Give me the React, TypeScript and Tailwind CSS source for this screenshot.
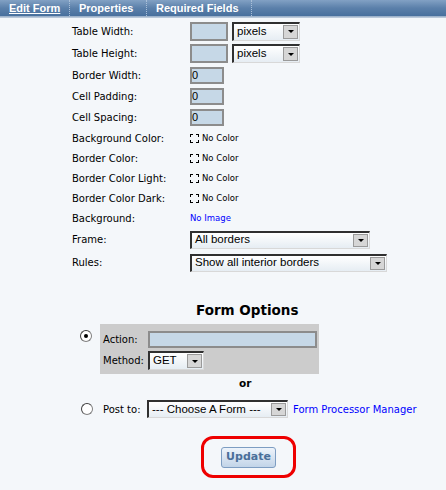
import React from "react";

const lbl = "font-['DejaVu_Sans',Verdana,sans-serif] text-[10px] text-black";

function Select({ w, h = 18, text }: { w: number; h?: number; text: string }) {
  return (
    <div
      className="flex items-stretch border-t-2 border-l-2 border-t-[#303030] border-l-[#303030] border-r border-b border-r-[#d8d8d8] border-b-[#d8d8d8] bg-gradient-to-b from-[#ffffff] to-[#e6edf3]"
      style={{ width: w, height: h }}
    >
      <div className="flex-1 flex items-center pl-[3px] font-['Liberation_Sans',Arial,sans-serif] text-[11.5px] text-black leading-none whitespace-nowrap overflow-hidden">
        {text}
      </div>
      <div className="w-[15px] my-[1px] mr-[1px] border border-[#9a9a9a] bg-[#d6d6d6] flex items-center justify-center">
        <div className="w-0 h-0 border-l-[3px] border-r-[3px] border-t-[3px] border-l-transparent border-r-transparent border-t-black" />
      </div>
    </div>
  );
}

function Input({ w, h, value }: { w: number; h: number; value?: string }) {
  return (
    <div
      className="border-2 border-[#8c8c8c] bg-[#c6d8e7] flex items-center font-['Liberation_Sans',Arial,sans-serif] text-[11px] text-black leading-none"
      style={{ width: w, height: h }}
    >
      {value}
    </div>
  );
}

function Row({ h, label, children }: { h: number; label: string; children?: React.ReactNode }) {
  return (
    <div className="flex items-center" style={{ height: h }}>
      <div className={`${lbl} w-[118px]`}>{label}</div>
      <div className="flex items-center gap-[4px]">{children}</div>
    </div>
  );
}

function NoColor() {
  return (
    <div className="flex items-center gap-[3px]">
      <div className="w-[9px] h-[9px] border border-dashed border-black" />
      <span className="font-['DejaVu_Sans',Verdana,sans-serif] text-[8.5px] text-black">No Color</span>
    </div>
  );
}

function Radio({ checked }: { checked?: boolean }) {
  return (
    <div className="w-[12px] h-[12px] rounded-full border border-[#808080] border-t-[#404040] border-l-[#404040] bg-white flex items-center justify-center">
      {checked && <div className="w-[4px] h-[4px] rounded-full bg-black" />}
    </div>
  );
}

export default function App() {
  return (
    <div className="w-[446px] h-[490px] bg-[#f4f7fa] overflow-hidden">
      <div className="h-[16px] bg-gradient-to-b from-[#82a1c4] via-[#5b80aa] to-[#48709d] flex items-center font-['Liberation_Sans',Arial,sans-serif] text-[11px] font-bold text-white">
        <div className="pl-[9px] w-[69px] underline leading-none">Edit Form</div>
        <div className="h-full border-l border-dotted border-[#a9bfd8]" />
        <div className="pl-[9px] w-[76px] leading-none">Properties</div>
        <div className="h-full border-l border-dotted border-[#a9bfd8]" />
        <div className="pl-[9px] w-[104px] leading-none whitespace-nowrap">Required Fields</div>
        <div className="h-full border-l border-dotted border-[#a9bfd8]" />
      </div>
      <div className="h-[2px] bg-gradient-to-b from-[#8fa7c3] to-[#c9d5e2]" />

      <div className="pl-[72px] pt-[2px]">
        <Row h={22} label="Table Width:">
          <Input w={38} h={19} />
          <Select w={68} h={19} text="pixels" />
        </Row>
        <Row h={23} label="Table Height:">
          <Input w={38} h={19} />
          <Select w={68} h={19} text="pixels" />
        </Row>
        <Row h={21} label="Border Width:">
          <Input w={34} h={17} value="0" />
        </Row>
        <Row h={21} label="Cell Padding:">
          <Input w={34} h={17} value="0" />
        </Row>
        <Row h={21} label="Cell Spacing:">
          <Input w={34} h={17} value="0" />
        </Row>
        <Row h={20} label="Background Color:">
          <NoColor />
        </Row>
        <Row h={20} label="Border Color:">
          <NoColor />
        </Row>
        <Row h={20} label="Border Color Light:">
          <NoColor />
        </Row>
        <Row h={20} label="Border Color Dark:">
          <NoColor />
        </Row>
        <Row h={20} label="Background:">
          <span className="font-['DejaVu_Sans',Verdana,sans-serif] text-[8.5px] text-[#0000ff]">No Image</span>
        </Row>
        <Row h={23} label="Frame:">
          <Select w={180} h={18} text="All borders" />
        </Row>
        <Row h={23} label="Rules:">
          <Select w={197} h={18} text="Show all interior borders" />
        </Row>
      </div>

      <div className="mt-[27px] pl-[196px] h-[18px] flex items-center font-['DejaVu_Sans',Verdana,sans-serif] text-[13.5px] font-bold text-black">
        Form Options
      </div>

      <div className="mt-[5px] flex items-start pl-[80px]">
        <div className="pt-[6px] w-[20px]">
          <Radio checked />
        </div>
        <div className="w-[219px] h-[50px] bg-[#cccccc] pl-[3px] pt-[6px] flex flex-col gap-[3px]">
          <div className="flex items-center h-[18px]">
            <span className={`${lbl} w-[45px]`}>Action:</span>
            <Input w={169} h={17} />
          </div>
          <div className="flex items-center h-[19px]">
            <span className={`${lbl} w-[45px]`}>Method:</span>
            <Select w={56} h={19} text="GET" />
          </div>
        </div>
      </div>

      <div className="mt-[4px] pl-[239px] h-[12px] flex items-center font-['DejaVu_Sans',Verdana,sans-serif] text-[10.5px] font-bold text-black">
        or
      </div>

      <div className="mt-[10px] flex items-center pl-[81px] h-[18px]">
        <div className="w-[22px]">
          <Radio />
        </div>
        <span className={`${lbl} w-[44px] text-[10.5px]`}>Post to:</span>
        <Select w={141} h={18} text="--- Choose A Form ---" />
        <span className="ml-[5px] font-['DejaVu_Sans',Verdana,sans-serif] text-[10px] text-[#0000ff] whitespace-nowrap">
          Form Processor Manager
        </span>
      </div>

      <div className="mt-[18px] ml-[201px] w-[95px] h-[42px] border-[3px] border-[#ee0000] rounded-[12px] flex items-center justify-center">
        <div className="w-[55px] h-[21px] rounded-[3px] border border-[#7d9dc2] bg-gradient-to-b from-[#eef4fb] to-[#c2d4e8] flex items-center justify-center font-['DejaVu_Sans',Verdana,sans-serif] text-[11px] font-bold text-[#4a6f9a]">
          Update
        </div>
      </div>
    </div>
  );
}
